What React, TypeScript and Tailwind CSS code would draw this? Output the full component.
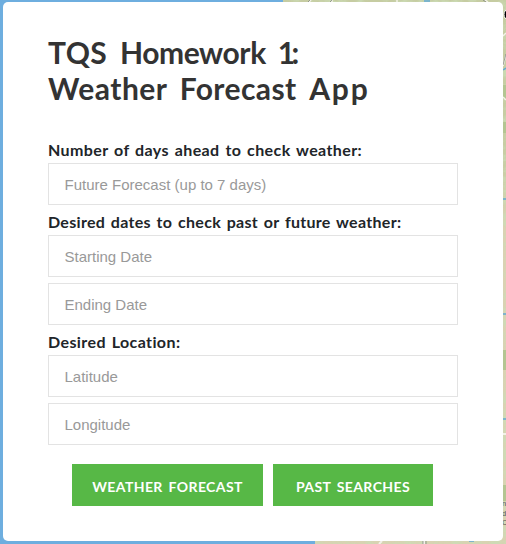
import React from 'react';

function MapBackdrop() {
  return (
    <svg className="absolute inset-0 h-full w-full" viewBox="0 0 506 544" aria-hidden="true">
      <defs>
        <filter id="terrain" x="0" y="0" width="100%" height="100%">
          <feTurbulence type="fractalNoise" baseFrequency="0.09 0.13" numOctaves="4" seed="8" />
          <feColorMatrix values="0 0 0 0 0.6  0 0 0 0 0.72  0 0 0 0 0.47  3.5 0 0 0 -1.5" />
        </filter>
        <linearGradient id="land-tone" x1="0" y1="0" x2="0" y2="1">
          <stop offset="0" stopColor="#c6cca2" />
          <stop offset=".3" stopColor="#c8cda4" />
          <stop offset=".42" stopColor="#dad2b3" />
          <stop offset="1" stopColor="#d8d3b2" />
        </linearGradient>
        <clipPath id="land">
          <path d="M283 0H506V544H315V530H490V10H283Z" />
        </clipPath>
      </defs>
      <rect width="506" height="544" fill="#6eaedf" />
      <path d="M283 0H506V544H315V530H490V10H283Z" fill="url(#land-tone)" />
      <g clipPath="url(#land)">
        <rect width="506" height="544" filter="url(#terrain)" opacity=".75" />
      </g>
      <path d="M503 85h3v14h-3zM503 122h3v11h-3zM503 350h3v20h-3zM503 485h3v16h-3z" fill="#b4c592" />
      <g stroke="#f3f1e8" fill="none">
        <path d="M309 2l2-2M332 0v2M397 0v2M485 0l3 2M503 66l3-11M503 36l3-3M503 97l3 3" strokeWidth="1.5" />
        <path d="M424 544v-4M379 544l3-3M503 434h3" strokeWidth="2" />
      </g>
      <path d="M308 2l2-2M330 2l2-2M483 0l3 2M423 544v-4M426 544v-4M503 65l3-11" stroke="#777b78" strokeWidth=".7" />
      <path d="M424 1h6M503 70l3-2M503 199h3M503 314h3M503 419h3M469 541h5" stroke="#61a9d5" strokeWidth="1.5" />
      <ellipse cx="507.5" cy="14.5" rx="3.5" ry="4.5" stroke="#fff" strokeWidth="1" />
      <g fill="#555" fontFamily="Liberation Sans, sans-serif" fontSize="7.5">
        <text x="502" y="506">n</text>
        <text x="502" y="515.5">d</text>
        <text x="502" y="525">C</text>
      </g>
    </svg>
  );
}

function Label({ children, className }: { children: React.ReactNode; className: string }) {
  return (
    <div className="pt-[5px] pb-px font-[Lato,sans-serif] text-base/6 font-bold whitespace-nowrap text-[#212529]">
      <span className={className}>{children}</span>
    </div>
  );
}

function Field({ placeholder }: { placeholder: string }) {
  return (
    <input
      placeholder={placeholder}
      className="block h-[42px] w-full border border-[#e3e3e3] bg-white px-[15.5px] font-['Liberation_Sans',Arial,sans-serif] text-[15px] text-[#333] outline-none placeholder:text-[#999]"
    />
  );
}

export default function App() {
  return (
    <main className="relative h-[544px] w-[506px] overflow-hidden px-[3px] pt-0.5">
      <MapBackdrop />
      <section className="relative h-[539px] w-[500px] rounded-[5px] bg-white px-[45px] pt-8">
        <h1 className="mb-[27px] font-[Lato,sans-serif] text-[30px]/[36px] font-bold whitespace-nowrap text-[#333] [word-spacing:5px]">
          <span className="tracking-[0.4px]">TQS </span>
          <span className="tracking-[-0.4px]">Homework </span>
          <span className="tracking-[-3.5px]">1:</span>
          <br />
          <span className="tracking-[0.5px]">Weather </span>
          <span className="tracking-[0.4px]">Forecast </span>
          <span className="tracking-[1.8px]">App</span>
        </h1>
        <form onSubmit={(e) => e.preventDefault()}>
          <Label className="tracking-[0.4px] [word-spacing:1.5px]">Number of days ahead to check weather:</Label>
          <Field placeholder="Future Forecast (up to 7 days)" />
          <Label className="tracking-[0.3px] [word-spacing:1.5px]">Desired dates to check past or future weather:</Label>
          <div className="flex flex-col gap-1.5">
            <Field placeholder="Starting Date" />
            <Field placeholder="Ending Date" />
          </div>
          <Label className="tracking-[0.4px] [word-spacing:1.5px]">Desired Location:</Label>
          <div className="flex flex-col gap-1.5">
            <Field placeholder="Latitude" />
            <Field placeholder="Longitude" />
          </div>
          <div className="mt-[19px] ml-6 flex gap-2.5 font-[Lato,sans-serif] text-sm font-bold whitespace-nowrap text-white">
            <button className="h-[42px] w-[191px] bg-[#57b846] pt-[3px] tracking-[0.4px] [word-spacing:2px]">WEATHER FORECAST</button>
            <button className="h-[42px] w-40 bg-[#57b846] pt-[3px] tracking-[0.4px] [word-spacing:2px]">PAST SEARCHES</button>
          </div>
        </form>
      </section>
    </main>
  );
}
